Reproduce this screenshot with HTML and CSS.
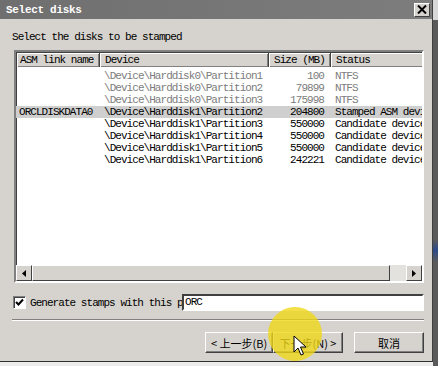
FILE: index.html
```html
<!DOCTYPE html>
<html lang="en">
<head>
  <meta charset="UTF-8" />
  <title>Select disks</title>
  <link rel="stylesheet" href="styles.css">
</head>
<body>

<div class="screen">
  <div class="dialog">
    <div class="titlebar">
      <span class="title">Select disks</span>
      <span class="close-btn">
        <svg width="10" height="9" viewBox="0 0 10 9"><path d="M1 0.5 L9 8.5 M9 0.5 L1 8.5" stroke="#000" stroke-width="2"/></svg>
      </span>
    </div>

    <div class="content">
      <div class="prompt">Select the disks to be stamped</div>

      <div class="listview">
        <div class="list-head">
          <div class="col col-name">ASM link name</div>
          <div class="col col-dev">Device</div>
          <div class="col col-size">Size (MB)</div>
          <div class="col col-status">Status</div>
        </div>
        <div class="list-body" id="rows"></div>
        <div class="hscroll">
          <span class="sb-btn">
            <svg width="4" height="7" viewBox="0 0 4 7"><path d="M4 0 L0 3.5 L4 7 Z" fill="#000"/></svg>
          </span>
          <span class="sb-thumb"></span>
          <span class="sb-track"></span>
          <span class="sb-btn">
            <svg width="4" height="7" viewBox="0 0 4 7"><path d="M0 0 L4 3.5 L0 7 Z" fill="#000"/></svg>
          </span>
        </div>
      </div>

      <div class="stamp-row">
        <span class="checkbox">
          <svg width="9" height="9" viewBox="0 0 9 9"><path d="M1 4 L3.5 6.5 L8 1.5" stroke="#000" stroke-width="2" fill="none"/></svg>
        </span>
        <span class="stamp-label">Generate stamps with this p</span>
        <span class="stamp-input">ORC</span>
      </div>

      <div class="separator"></div>

      <div class="buttons">
        <button class="btn btn-back">&lt; 上一步(B)</button>
        <button class="btn btn-next">下一步(N) &gt;</button>
        <button class="btn btn-cancel">取消</button>
      </div>
    </div>
  </div>

  <div class="side-strip"></div>
  <div class="cursor-glow"></div>
  <svg class="cursor" width="14" height="22" viewBox="0 0 14 22">
    <path d="M1 1 L1 17 L5 13 L8 20 L10.5 19 L7.5 12 L13 12 Z" fill="#fff" stroke="#000" stroke-width="1"/>
  </svg>
</div>

<script>
  const disks = [
    { name: "", dev: "\\Device\\Harddisk0\\Partition1", size: "100", status: "NTFS", dim: true },
    { name: "", dev: "\\Device\\Harddisk0\\Partition2", size: "79899", status: "NTFS", dim: true },
    { name: "", dev: "\\Device\\Harddisk0\\Partition3", size: "175998", status: "NTFS", dim: true },
    { name: "ORCLDISKDATA0", dev: "\\Device\\Harddisk1\\Partition2", size: "204800", status: "Stamped ASM device", selected: true },
    { name: "", dev: "\\Device\\Harddisk1\\Partition3", size: "550000", status: "Candidate device" },
    { name: "", dev: "\\Device\\Harddisk1\\Partition4", size: "550000", status: "Candidate device" },
    { name: "", dev: "\\Device\\Harddisk1\\Partition5", size: "550000", status: "Candidate device" },
    { name: "", dev: "\\Device\\Harddisk1\\Partition6", size: "242221", status: "Candidate device" }
  ];

  const rows = document.getElementById("rows");
  disks.forEach(d => {
    const row = document.createElement("div");
    row.className = "list-row" + (d.dim ? " dim" : "") + (d.selected ? " selected" : "");
    row.innerHTML = `<div class="col col-name">${d.name}</div>
      <div class="col col-dev">${d.dev}</div>
      <div class="col col-size">${d.size}</div>
      <div class="col col-status">${d.status}</div>`;
    rows.appendChild(row);
  });
</script>

</body>
</html>
```

FILE: styles.css
```css
body {
  margin: 0;
  font-family: 'Liberation Mono', monospace;
  font-size: 11px;
  color: #000;
}

.screen {
  position: relative;
  width: 438px;
  height: 366px;
  overflow: hidden;
  background: #ececec;
  display: flex;
}

.dialog {
  width: 432px;
  height: 361px;
  background: #d6d3ce;
  border-right: 1px solid #404040;
  border-bottom: 1px solid #303030;
  display: flex;
  flex-direction: column;
  flex-shrink: 0;
}

.side-strip {
  width: 5px;
  height: 366px;
  background: linear-gradient(to bottom, #d8d8d8 0, #d8d8d8 20px, #5a5a5a 20px, #5a5a5a 240px, #2b4a8a 250px, #5a5a5a 262px);
}

.titlebar {
  height: 19px;
  background: linear-gradient(to right, #6f6f6f, #7d7d7d);
  display: flex;
  align-items: center;
  justify-content: space-between;
  padding: 0 2px 0 6px;
  flex-shrink: 0;
}

.title {
  color: #fff;
  font-weight: bold;
  font-size: 11px;
  letter-spacing: -0.3px;
}

.close-btn {
  width: 14px;
  height: 12px;
  background: #d6d3ce;
  border: 1px solid;
  border-color: #fff #404040 #404040 #fff;
  display: flex;
  align-items: center;
  justify-content: center;
}

.content {
  padding: 0 8px 0 12px;
  display: flex;
  flex-direction: column;
}

.prompt {
  margin-top: 12px;
  height: 12px;
  line-height: 12px;
  letter-spacing: -0.95px;
}

.listview {
  margin: 7px 0 0 2px;
  width: 406px;
  height: 229px;
  background: #fff;
  border: 2px solid;
  border-color: #808080 #fff #fff #808080;
  box-shadow: inset 1px 1px 0 #404040;
  display: flex;
  flex-direction: column;
  overflow: hidden;
}

.list-head {
  display: flex;
  height: 14px;
  margin: 1px 0 0 1px;
  background: #d6d3ce;
  flex-shrink: 0;
}

.list-head .col {
  border-right: 1px solid #404040;
  box-shadow: inset 1px 1px 0 #fff, inset -1px -1px 0 #808080;
  line-height: 14px;
}

.list-head .col-size {
  text-align: left;
  padding: 0 0 0 5px;
}

.list-body {
  flex: 1;
  padding-top: 3px;
}

.list-row {
  display: flex;
  height: 12px;
  line-height: 12px;
}

.list-row.dim {
  color: #7c7c7c;
}

.list-row.selected {
  background: #cfcfcf;
}

.col {
  white-space: nowrap;
  overflow: hidden;
  letter-spacing: -0.95px;
  box-sizing: border-box;
  flex-shrink: 0;
}

.col-name {
  width: 83px;
  padding-left: 3px;
}

.col-dev {
  width: 169px;
  padding-left: 5px;
}

.col-size {
  width: 62px;
  text-align: right;
  padding-right: 6px;
}

.col-status {
  width: 120px;
  padding-left: 5px;
}

.hscroll {
  height: 16px;
  display: flex;
  background: #e4e2de;
  flex-shrink: 0;
}

.sb-btn {
  width: 16px;
  height: 16px;
  box-sizing: border-box;
  background: #d6d3ce;
  border: 1px solid;
  border-color: #fff #404040 #404040 #fff;
  display: flex;
  align-items: center;
  justify-content: center;
}

.sb-thumb {
  width: 358px;
  box-sizing: border-box;
  background: #d6d3ce;
  border: 1px solid;
  border-color: #fff #404040 #404040 #fff;
}

.sb-track {
  flex: 1;
}

.stamp-row {
  margin-top: 11px;
  display: flex;
  align-items: center;
  height: 17px;
}

.checkbox {
  width: 11px;
  height: 11px;
  background: #fff;
  border: 1px solid;
  border-color: #808080 #fff #fff #808080;
  box-shadow: inset 1px 1px 0 #404040;
  display: flex;
  align-items: center;
  justify-content: center;
  margin-left: 1px;
}

.stamp-label {
  margin-left: 4px;
  width: 152px;
  letter-spacing: -0.95px;
  white-space: nowrap;
  overflow: hidden;
}

.stamp-input {
  flex: 1;
  height: 13px;
  line-height: 13px;
  background: #fff;
  border: 2px solid;
  border-color: #404040 #fff #fff #404040;
  padding-left: 1px;
  letter-spacing: -0.95px;
}

.separator {
  margin-top: 8px;
  height: 1px;
  background: #808080;
  border-bottom: 1px solid #fff;
}

.buttons {
  margin-top: 11px;
  display: flex;
  justify-content: flex-end;
}

.btn {
  height: 21px;
  padding: 0;
  margin: 0;
  font-family: 'Noto Sans CJK SC', sans-serif;
  font-size: 11px;
  color: #000;
  background: #d6d3ce;
  border: 1px solid;
  border-color: #fff #404040 #404040 #fff;
  box-shadow: inset -1px -1px 0 #808080;
}

.btn-back {
  width: 68px;
}

.btn-next {
  width: 70px;
}

.btn-cancel {
  width: 70px;
  margin-left: 11px;
}

.cursor-glow {
  position: absolute;
  left: 268px;
  top: 307px;
  width: 54px;
  height: 54px;
  border-radius: 50%;
  background: rgba(240, 215, 20, 0.78);
}

.cursor {
  position: absolute;
  left: 293px;
  top: 335px;
}
```
